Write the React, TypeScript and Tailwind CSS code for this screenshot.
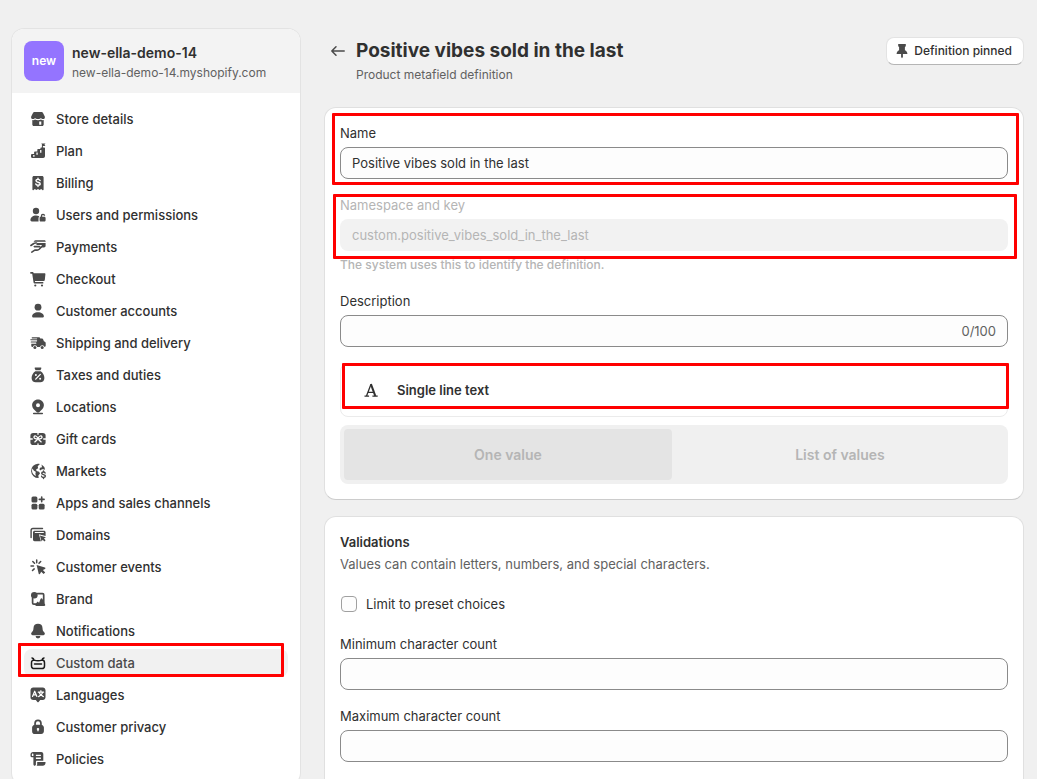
import { useState } from 'react'
import type { ReactNode } from 'react'

// ---------------------------------------------------------------------------
// Icons (20x20 grid, fill follows the text colour)
// ---------------------------------------------------------------------------

function Icon({ children, className = '' }: { children: ReactNode; className?: string }) {
  return (
    <svg viewBox="0 0 20 20" fill="currentColor" aria-hidden="true" className={`size-5 shrink-0 ${className}`}>
      {children}
    </svg>
  )
}

const line = {
  fill: 'none',
  stroke: 'currentColor',
  strokeWidth: 1.5,
  strokeLinecap: 'round',
  strokeLinejoin: 'round',
} as const

const cut = { ...line, stroke: '#fff' } as const

const icons = {
  store: (
    <Icon>
      <path d="M6.4 3h7.2c.6 0 1.100.3 1.300.8l1.900 3.600c.5 1.500-.5 2.700-1.800 2.700-.9 0-1.600-.5-2-1.100-.6.700-1.300 1.100-2.200 1.100h-1.600c-.9 0-1.600-.4-2.200-1.100-.4.600-1.100 1.100-2 1.100-1.300 0-2.300-1.200-1.800-2.700l1.900-3.600c.2-.5.700-.8 1.300-.8Z" />
      <path
        fillRule="evenodd"
        d="M4.300 11.100c1 .2 1.900 0 2.700-.5 1.700 1 4.300 1 6 0 .8.5 1.700.7 2.700.5v4.400c0 .8-.7 1.500-1.500 1.500H5.800c-.8 0-1.500-.7-1.500-1.500v-4.400Zm6.900 1.500v3.200h2.100v-3.200h-2.100Z"
      />
    </Icon>
  ),
  plan: (
    <Icon>
      <path d="M13.200 2.500h4.300l-1.100 1.200L17.500 5h-2.600v2h-1V3.300Z" />
      <path
        fillRule="evenodd"
        d="M13.400 6.500H16c.6 0 1 .4 1 1V15c0 1.100-.7 2-1.800 2H4.200c-.7 0-1.200-.5-1.200-1.200v-1.600c0-.7.5-1.200 1.200-1.200h1.900v-1.500c0-.6.500-1 1-1h2.200V9c0-.6.400-1 1-1h2.100v-.5c0-.6.400-1 1-1ZM5.200 14v1.700h1.300V14H5.200Zm3.200-2.600v2.300h1.300v-2.300H8.400Zm3.700-2.400v2.800h1.300V9h-1.300Z"
      />
    </Icon>
  ),
  billing: (
    <Icon>
      <path d="M6 3h8c.9 0 1.600.7 1.600 1.600v11.900c0 .7-.7 1-1.200.6L13.200 16l-1.600 1.100L10 16l-1.600 1.100L6.800 16l-1.200 1.100c-.5.4-1.200.1-1.200-.6V4.600C4.400 3.700 5.100 3 6 3Z" />
      <path
        {...cut}
        strokeWidth={1.400}
        d="M12.100 7.600c-.3-.8-1-1.200-2.100-1.200-1.200 0-2 .5-2 1.400 0 2 4.200.9 4.200 3 0 .9-.9 1.500-2.200 1.500-1.200 0-2-.5-2.200-1.300M10 5.100v1.200M10 12.400v1.200"
      />
    </Icon>
  ),
  users: (
    <Icon>
      <circle cx="8" cy="6" r="3.200" />
      <path d="M8 10.400c1.300 0 2.400.3 3.300.8-.5.500-.8 1.200-.8 2v3.300H3.800c-.8 0-1.400-.6-1.400-1.400 0-2.800 2.600-4.700 5.600-4.700Z" />
      <path
        fillRule="evenodd"
        d="M12.800 11.700V11a2.200 2.200 0 0 1 4.400-.2h-1.400c-.1-.5-.4-.8-.8-.8-.5 0-.8.4-.8 1v.7h2.200c.6 0 1.200.6 1.200 1.300v2.200c0 .7-.6 1.300-1.300 1.300h-3.500c-.7 0-1.200-.6-1.200-1.300V13c0-.8.500-1.300 1.200-1.300Z"
      />
    </Icon>
  ),
  payments: (
    <Icon>
      <path d="M8.500 3.300h8c.7 0 1.200.6 1.200 1.400H5.600c.5-.9 1.600-1.400 2.900-1.400Z" />
      <path d="M9 6.100h8.600v2.600c0 1-.7 1.700-1.600 1.700h-3.500c1-.6 1.400-1.400 1.200-2.300H8.300L9 6.100Z" />
      <path
        {...line}
        strokeWidth={1.600}
        d="m2.900 8.500 2.900-2c.5-.4 1.100-.5 1.700-.5h1M6.300 9.600h5.200M13.400 9.900l-2.200 2.300c-.6.600-1.300.9-2.100.9H6.800l-3 2"
      />
    </Icon>
  ),
  checkout: (
    <Icon>
      <path d="M2.900 3.100h1.400c.7 0 1.300.5 1.400 1.200h10.900c.5 0 .9.400.8.900l-.6 5.700c-.1.700-.7 1.200-1.400 1.200H6.900l.2 1h8.200v1.400H6.600c-.5 0-.9-.3-1-.8L4.200 4.700H2.900a.8.800 0 0 1 0-1.600Z" />
      <circle cx="7.300" cy="16.500" r="1.100" />
      <circle cx="14" cy="16.500" r="1.100" />
    </Icon>
  ),
  person: (
    <Icon>
      <circle cx="10" cy="6.200" r="3.400" />
      <path d="M10 11.200c3.300 0 5.900 1.700 5.900 4 0 .8-.7 1.400-1.500 1.400H5.600c-.8 0-1.500-.6-1.500-1.400 0-2.300 2.600-4 5.900-4Z" />
    </Icon>
  ),
  shipping: (
    <Icon>
      <path d="M4.200 4.300h6.600c.7 0 1.300.5 1.500 1.100h1.400c.7 0 1.300.4 1.500 1l.7 1.800 1 .5c.5.3.8.7.8 1.300v2.800c0 .7-.6 1.200-1.200 1.200a2.300 2.300 0 0 0-4.500 0H9.200a2.300 2.300 0 0 0-4.500 0c-.8 0-1.400-.6-1.400-1.300v-1.900h4.600a.7.7 0 0 0 0-1.300H3.200a.5.500 0 0 1 0-1h5.500a.7.7 0 0 0 0-1.300H2.800c-.4 0-.6-.2-.6-.5s.2-.5.600-.5h6a.4.4 0 0 0 0-.8H4.200a.5.500 0 0 1 0-1.100Z" />
      <circle cx="6.900" cy="14.400" r="1.500" />
      <circle cx="14.200" cy="14.400" r="1.500" />
    </Icon>
  ),
  taxes: (
    <Icon>
      <path d="M7.300 2.500h5.400c.5 0 .8.500.6.900l-.9 1.900H7.600l-.9-1.900c-.2-.4.100-.9.600-.9ZM7.300 6.200h5.400c2.200 1.500 3.700 4.200 3.700 6.700 0 2.700-1.700 4.300-4.100 4.300H7.700c-2.400 0-4.100-1.600-4.100-4.300 0-2.500 1.500-5.200 3.700-6.700Z" />
      <path {...cut} strokeWidth={1.300} d="m12.300 9.400-4.600 4.700" />
      <circle cx="7.900" cy="9.900" r="1" fill="#fff" />
      <circle cx="12.100" cy="13.700" r="1" fill="#fff" />
    </Icon>
  ),
  location: (
    <Icon>
      <path
        fillRule="evenodd"
        d="M10 2.500c3.300 0 5.900 2.500 5.900 5.700 0 2.800-2.300 4.700-4.700 7-.7.600-1.700.6-2.400 0-2.400-2.300-4.700-4.200-4.700-7 0-3.200 2.600-5.700 5.900-5.700Zm0 3.700a2 2 0 1 0 0 4 2 2 0 0 0 0-4Z"
      />
      <path {...line} d="M5.700 16.600h8.600" />
    </Icon>
  ),
  gift: (
    <Icon>
      <rect x="2.400" y="3.900" width="15.200" height="12.200" rx="2.800" />
      <path
        {...cut}
        strokeWidth={1.300}
        d="M10 3.300v2M2 10h2.300M15.700 10H18M10 14.800v2M10 10C9.300 6.600 6 6 6 8.200c0 1.300 1.800 1.800 4 1.800Zm0 0c.7-3.400 4-4 4-1.800 0 1.300-1.800 1.800-4 1.800Zm0 0-3.200 2.900M10 10l3.200 2.900"
      />
    </Icon>
  ),
  markets: (
    <Icon>
      <path d="M9.900 2.700c.7 0 1.400.1 2 .3L9.700 5.200l.4 2-2 1.400.5 1.500 2.500.6.900 1.900-1.700 1.900.4 2.600A7.200 7.200 0 0 1 9.900 2.700Z" />
      <path d="M13.500 3.600a7.200 7.200 0 0 1 3.600 5.200c-1.600-.9-3.600-.6-4.700.7l-1-1.200.7-1.500 1.900-.6-.5-2.600Z" />
      <path fill="#fff" d="m4.500 7.400 1.400 2.300 1.900 1.100-.4 2 .5 2.200C5.400 14 4 12 4 9.800c0-.9.200-1.700.5-2.400Z" />
      <path
        {...line}
        strokeWidth={1.400}
        d="M17.100 12c-.3-.7-.9-1-1.700-1-1 0-1.700.5-1.700 1.300 0 1.700 3.700.9 3.700 2.800 0 .9-.8 1.400-1.900 1.400-1 0-1.700-.4-1.900-1.200M15.500 10v.9M15.500 16.600v.9"
      />
    </Icon>
  ),
  apps: (
    <Icon>
      <rect x="3.500" y="3.500" width="5.900" height="5.900" rx="1.500" />
      <rect x="3.500" y="10.700" width="5.900" height="5.900" rx="1.500" />
      <rect x="10.700" y="10.700" width="5.900" height="5.900" rx="1.500" />
      <path {...line} strokeWidth={1.600} d="M13.700 4v4.800M11.300 6.400h4.800" />
    </Icon>
  ),
  domains: (
    <Icon>
      <path {...line} strokeWidth={1.400} d="M3.100 12.600V5.300c0-1.100.7-1.800 1.800-1.800h9.600" />
      <path
        fillRule="evenodd"
        d="M6.600 5.700h9.300c1 0 1.700.7 1.700 1.600v3.800l-6.700-1.800 2 6.900H6.600c-.9 0-1.600-.7-1.600-1.600V7.300c0-.9.700-1.600 1.600-1.600Zm.2 1.400v.9h9v-.9h-9Z"
      />
      <path d="m11.900 10.400 6 1.900-1.900 1.200 1.600 1.700-1.200 1.200-1.700-1.700-1.100 1.900Z" />
    </Icon>
  ),
  events: (
    <Icon>
      <path {...line} strokeWidth={1.500} d="M8.700 3v2.700M4.800 4.500l1.700 1.800M3 9h2.500M4.500 13.500l1.700-1.600M12.700 4.500 11 6.300" />
      <path d="m8.600 8 8.300 2.500c.7.200.8 1.100.1 1.500l-2.100 1.100 2.300 2.300-1.600 1.700-2.400-2.400-1.100 2.100c-.3.600-1.200.6-1.400-.1Z" />
    </Icon>
  ),
  brand: (
    <Icon>
      <circle cx="6.300" cy="6.200" r="3.300" />
      <path {...line} strokeWidth={1.700} d="M9.500 4.600h5c.7 0 1.200.5 1.200 1.200v8M4.600 9v5c0 .7.500 1.200 1.200 1.200h3.700" />
      <path d="M12.500 10c.5-.9 1.500-.9 2 0l2.600 5.500c.4.700-.1 1.500-.9 1.500H8.400c-.9 0-1.400-.8-.9-1.500l1.400-2.200c.4-.6 1-.6 1.500-.1l.7.600Z" />
    </Icon>
  ),
  bell: (
    <Icon>
      <path d="M10 2.800a4.500 4.500 0 0 1 4.500 4.200c.1 2.300.6 3.200 1.900 4.600 1 1.100.3 2.600-.9 2.600h-11c-1.200 0-1.900-1.500-.9-2.600C4.900 10.200 5.400 9.300 5.500 7A4.500 4.500 0 0 1 10 2.800ZM7.600 15h4.800a2.400 2.400 0 0 1-4.800 0Z" />
    </Icon>
  ),
  customData: (
    <Icon className="text-[#1a1a1a]">
      <path
        {...line}
        d="M4 5c1.100.2 1.800 1 2.100 2.100M16 5c-1.100.2-1.800 1-2.100 2.100M6.100 7.100c2.500.8 5.300.8 7.800 0 1.600 0 2.600 1 2.600 2.600v3.200c0 1.600-1.100 2.700-2.700 2.700H6.200c-1.600 0-2.700-1.100-2.700-2.700V9.700c0-1.600 1-2.600 2.600-2.600ZM6.500 11.100h7"
      />
    </Icon>
  ),
  languages: (
    <Icon>
      <path d="M5.200 2.600h9.600c1.500 0 2.700 1.200 2.700 2.700v7c0 1.500-1.200 2.700-2.700 2.700h-2.600l-1.600 1.900c-.3.400-.9.400-1.200 0L7.800 15H5.200a2.700 2.700 0 0 1-2.700-2.700v-7c0-1.500 1.200-2.700 2.700-2.700Z" />
      <path
        {...cut}
        strokeWidth={1.200}
        d="m4.500 11.400 2.200-5.200 2.200 5.200M5.300 9.800h2.800M10.300 7.200h5.300M12.900 5.700v1.400M14.700 7.400c-.5 2-2 3.300-4.100 4.200M11.200 7.500c.6 2 2 3.300 4.200 4.100"
      />
    </Icon>
  ),
  lock: (
    <Icon>
      <path
        fillRule="evenodd"
        d="M6.200 7.900V6.400a3.800 3.800 0 0 1 7.600 0v1.500c1.200.3 2.100 1.300 2.100 2.600v3.700c0 1.600-1.200 2.800-2.800 2.800H6.900a2.800 2.800 0 0 1-2.800-2.800v-3.700c0-1.300.9-2.300 2.100-2.600Zm1.700-.2h4.200V6.400a2.100 2.100 0 0 0-4.200 0v1.300Zm2.100 3.200c-.8 0-1.300.6-1.300 1.200 0 .4.200.8.600 1v1.100h1.400v-1.100c.4-.2.600-.6.600-1 0-.6-.5-1.200-1.300-1.200Z"
      />
    </Icon>
  ),
  policies: (
    <Icon>
      <path
        fillRule="evenodd"
        d="M5 3h8.300c1.100 0 2 .9 2 2v6.800H9.200c-.8 0-1.300.5-1.300 1.300v2.500c0 .6-.5 1.100-1.100 1.100-.8 0-1.400-.7-1.400-1.500V8.300H3.700c-.7 0-1.200-.5-1.200-1.200V5.500C2.500 4.100 3.600 3 5 3Zm-.1 1.600c-.6 0-1 .4-1 1v1.300h1.500V5.100c0-.3-.2-.5-.5-.5Zm3 1.100v1.300h5V5.700h-5Zm0 2.900v1.300h5V8.600h-5Z"
      />
      <path d="M9.200 13.100h8.300v.9c0 1.600-1.200 2.800-2.700 2.800H8.600c.4-.4.600-.9.600-1.500Z" />
    </Icon>
  ),
}

const NAV_ITEMS = [
  { label: 'Store details', icon: icons.store },
  { label: 'Plan', icon: icons.plan },
  { label: 'Billing', icon: icons.billing },
  { label: 'Users and permissions', icon: icons.users },
  { label: 'Payments', icon: icons.payments },
  { label: 'Checkout', icon: icons.checkout },
  { label: 'Customer accounts', icon: icons.person },
  { label: 'Shipping and delivery', icon: icons.shipping },
  { label: 'Taxes and duties', icon: icons.taxes },
  { label: 'Locations', icon: icons.location },
  { label: 'Gift cards', icon: icons.gift },
  { label: 'Markets', icon: icons.markets },
  { label: 'Apps and sales channels', icon: icons.apps },
  { label: 'Domains', icon: icons.domains },
  { label: 'Customer events', icon: icons.events },
  { label: 'Brand', icon: icons.brand },
  { label: 'Notifications', icon: icons.bell },
  { label: 'Custom data', icon: icons.customData, active: true },
  { label: 'Languages', icon: icons.languages },
  { label: 'Customer privacy', icon: icons.lock },
  { label: 'Policies', icon: icons.policies },
]

// ---------------------------------------------------------------------------
// Building blocks
// ---------------------------------------------------------------------------

/* Red call-out frame laid over a control */
function Highlight({ className }: { className: string }) {
  return <div className={`pointer-events-none absolute z-10 rounded-[1px] border-3 border-[#ff0000] ${className}`} />
}

function Card({ children }: { children: ReactNode }) {
  return (
    <section className="flex flex-col gap-4 rounded-xl border border-[#e0e0e0] border-b-[#cccccc] bg-white p-[15px]">
      {children}
    </section>
  )
}

const inputClass =
  'h-8 w-full rounded-lg border border-[#8a8a8a] bg-[#fdfdfd] px-[11px] text-[13px] leading-5 text-[#303030] outline-none'

function CountField({ id, label }: { id: string; label: string }) {
  return (
    <div className="flex flex-col gap-1">
      <label htmlFor={id}>{label}</label>
      <input id={id} type="text" inputMode="numeric" className={inputClass} />
    </div>
  )
}

function Sidebar() {
  return (
    <aside className="w-72 shrink-0 self-start overflow-hidden rounded-xl bg-white shadow-[0_0_0_1px_#e3e3e3]">
      <div className="flex items-center gap-2 bg-[#f3f3f3] p-3">
        <div className="flex size-10 items-center justify-center rounded-lg bg-[#9474ff] text-xs font-semibold text-white">
          new
        </div>
        <div>
          <p className="text-sm leading-6 font-semibold">new-ella-demo-14</p>
          <p className="text-xs leading-4 text-[#616161]">new-ella-demo-14.myshopify.com</p>
        </div>
      </div>
      <nav aria-label="Settings" className="p-3">
        <ul className="flex flex-col gap-1">
          {NAV_ITEMS.map((item) => (
            <li key={item.label} className="relative">
              <a
                href="#"
                aria-current={item.active ? 'page' : undefined}
                className={`flex h-7 items-center gap-2 rounded-lg px-1 font-medium ${item.active ? 'bg-[#f1f1f1] text-[#4a4a4a]' : ''}`}
              >
                <span className="text-[#4a4a4a]">{item.icon}</span>
                {item.label}
              </a>
              {item.active && <Highlight className="-top-1.5 right-1 bottom-0 -left-1.5" />}
            </li>
          ))}
        </ul>
      </nav>
    </aside>
  )
}

// ---------------------------------------------------------------------------
// Page
// ---------------------------------------------------------------------------

export default function App() {
  const [name, setName] = useState('Positive vibes sold in the last')
  const [description, setDescription] = useState('')
  const [preset, setPreset] = useState(false)

  return (
    <div className="flex h-screen gap-6 overflow-hidden bg-[#f0f0f0] pt-[29px] pr-[13px] pl-3 font-['Inter','Liberation_Sans',sans-serif] text-[13px] leading-5 text-[#303030]">
      <Sidebar />

      <main className="min-w-0 flex-1 pt-2">
        <header className="flex items-start justify-between pb-[22px]">
          <div className="flex gap-2">
            <button type="button" aria-label="Back" className="ml-1 flex h-7 items-center text-[#4a4a4a]">
              <Icon>
                <path {...line} d="M16.200 10H3.800M8 5.800 3.800 10 8 14.200" />
              </Icon>
            </button>
            <div>
              <h1 className="text-[19px] leading-7 font-bold">Positive vibes sold in the last</h1>
              <p className="text-xs leading-5 text-[#616161]">Product metafield definition</p>
            </div>
          </div>
          <button
            type="button"
            className="flex h-7 items-center gap-0.5 rounded-lg border border-[#e3e3e3] border-b-[#b5b5b5] bg-white pr-[11px] pl-[5px] text-xs font-medium"
          >
            <Icon className="text-[#4a4a4a]">
              <path d="M6.200 3h7.600v2.300l-.9.700v3.200c1.500.7 2.500 1.900 2.500 3.800h-4.500v3.100l-.9 1.200-.9-1.200V13H4.600c0-1.900 1-3.100 2.500-3.800V6l-.9-.7V3Z" />
            </Icon>
            Definition pinned
          </button>
        </header>

        <div className="flex flex-col gap-4">
          <Card>
            <div className="relative flex flex-col gap-1">
              <label htmlFor="name">Name</label>
              <input
                id="name"
                type="text"
                value={name}
                onChange={(e) => setName(e.target.value)}
                className={inputClass}
              />
              <Highlight className="-top-2.5 -right-[11px] -bottom-1.5 -left-2" />
            </div>

            <div className="relative flex flex-col gap-1 text-[#b5b5b5]">
              <label htmlFor="namespace">Namespace and key</label>
              <input
                id="namespace"
                type="text"
                disabled
                defaultValue="custom.positive_vibes_sold_in_the_last"
                aria-describedby="namespace-help"
                className="h-8 w-full rounded-lg bg-[#f2f2f2] px-3 text-[13px] leading-5 text-[#b5b5b5]"
              />
              <p id="namespace-help" className="text-xs leading-5 font-medium">
                The system uses this to identify the definition.
              </p>
              <Highlight className="-top-px -right-[9px] bottom-4 -left-[7px]" />
            </div>

            <div className="flex flex-col gap-1">
              <label htmlFor="description">Description</label>
              <div className="flex h-8 items-center rounded-lg border border-[#8a8a8a] bg-[#fdfdfd] px-[11px]">
                <input
                  id="description"
                  type="text"
                  maxLength={100}
                  value={description}
                  onChange={(e) => setDescription(e.target.value)}
                  className="min-w-0 flex-1 outline-none"
                />
                <span className="text-[#616161]">{description.length}/100</span>
              </div>
            </div>

            <div className="flex flex-col gap-2">
              <div className="relative flex h-[54px] items-center gap-4 rounded-lg border border-[#ebebeb] px-5 font-semibold">
                <Icon>
                  <path {...line} strokeLinecap="butt" strokeWidth={1.300} d="m5.500 16 4.300-11.300M6.800 12.300h5.800M3.500 16.100h4.600M11.400 16.100h5.300" />
                  <path {...line} strokeLinecap="butt" strokeWidth={2.100} d="m9.900 4 4.400 12" />
                </Icon>
                Single line text
                <Highlight className="-top-px -right-0.5 bottom-[7px] left-px" />
              </div>

              <div className="grid grid-cols-2 gap-1 rounded-lg bg-[#f0f0f0] p-1 text-sm font-semibold text-[#b5b5b5]">
                <button type="button" disabled className="h-[51px] rounded bg-[#e4e4e4]">
                  One value
                </button>
                <button type="button" disabled className="h-[51px] rounded">
                  List of values
                </button>
              </div>
            </div>
          </Card>

          <Card>
            <div className="flex flex-col gap-0.5">
              <h2 className="font-semibold">Validations</h2>
              <p className="text-[#616161]">Values can contain letters, numbers, and special characters.</p>
            </div>

            <label className="flex items-center gap-2 py-1">
              <input
                type="checkbox"
                checked={preset}
                onChange={(e) => setPreset(e.target.checked)}
                className="mx-px size-4 appearance-none rounded border border-[#a0a0a0] bg-[#fdfdfd] checked:bg-[#303030]"
              />
              Limit to preset choices
            </label>

            <div className="flex flex-col gap-4 pb-8">
              <CountField id="min-count" label="Minimum character count" />
              <CountField id="max-count" label="Maximum character count" />
            </div>
          </Card>
        </div>
      </main>
    </div>
  )
}
